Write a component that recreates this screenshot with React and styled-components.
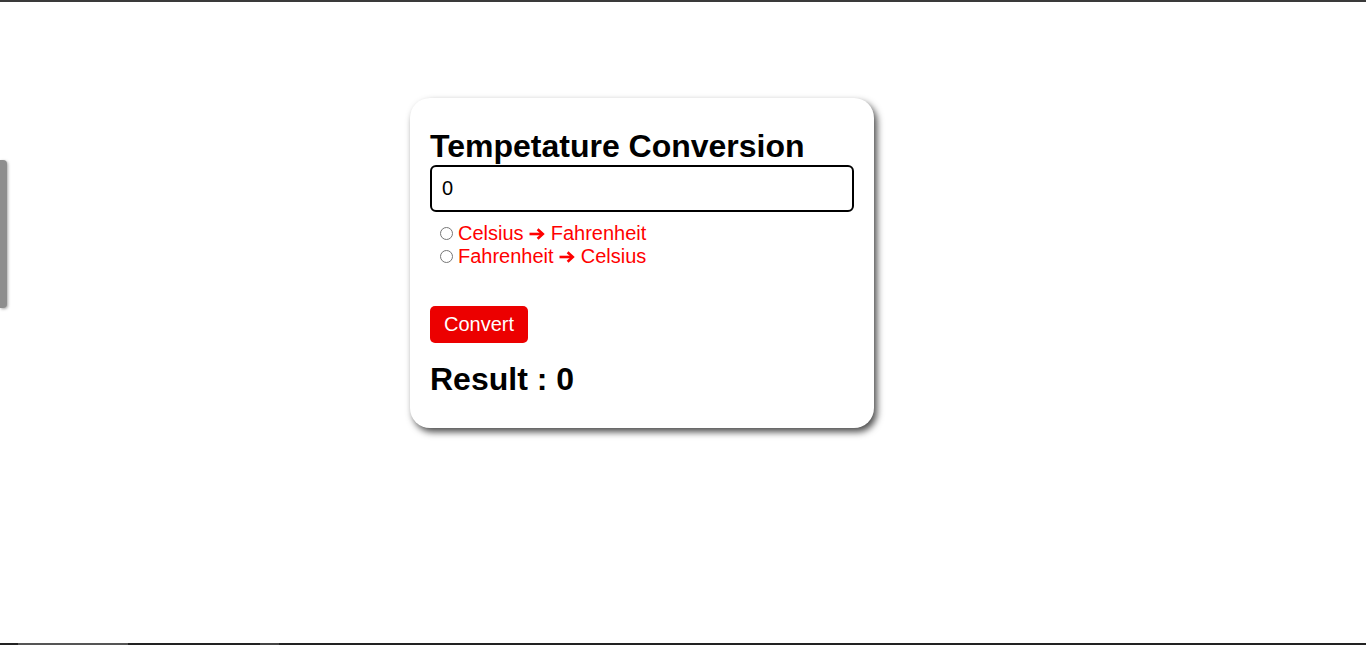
import styled, { createGlobalStyle } from 'styled-components';
import { useState } from 'react';

const GlobalStyle = createGlobalStyle`
  html, body {
    margin: 0;
    padding: 0;
    background: #ffffff;
    font-family: 'Liberation Sans', Arial, sans-serif;
  }
`;

function Arrow() {
  return (
    <ArrowIcon viewBox="0 0 16 12" aria-hidden="true">
      <path d="M0.5 6 H13.2" stroke="currentColor" strokeWidth="2.6" fill="none" />
      <path d="M8.6 1.2 L13.8 6 L8.6 10.8" stroke="currentColor" strokeWidth="2.6" fill="none" strokeLinejoin="miter" />
    </ArrowIcon>
  );
}

export default function App() {
  const [value, setValue] = useState('0');
  const [mode, setMode] = useState('');
  const [result, setResult] = useState(0);

  const convert = () => {
    const n = parseFloat(value) || 0;
    if (mode === 'cf') setResult(n * 9 / 5 + 32);
    else if (mode === 'fc') setResult((n - 32) * 5 / 9);
    else setResult(0);
  };

  return (
    <Page>
      <GlobalStyle />
      <SideTab />
      <Main>
        <Card>
          <Title>Tempetature Conversion</Title>
          <TempInput value={value} onChange={(e) => setValue(e.target.value)} />
          <Options>
            <Option>
              <input type="radio" name="mode" checked={mode === 'cf'} onChange={() => setMode('cf')} />
              Celsius <Arrow /> Fahrenheit
            </Option>
            <Option>
              <input type="radio" name="mode" checked={mode === 'fc'} onChange={() => setMode('fc')} />
              Fahrenheit <Arrow /> Celsius
            </Option>
          </Options>
          <ConvertButton onClick={convert}>Convert</ConvertButton>
          <Result>Result : {result}</Result>
        </Card>
      </Main>
      <BottomBar />
    </Page>
  );
}

const Page = styled.div`
  min-height: 100vh;
  box-sizing: border-box;
  border-top: 2px solid #3a3a3a;
  display: flex;
  flex-direction: column;
`;

const SideTab = styled.div`
  position: fixed;
  left: 0;
  top: 160px;
  width: 7px;
  height: 148px;
  background: #8e8e8e;
  border-radius: 0 4px 4px 0;
  box-shadow: 1px 1px 3px rgba(0, 0, 0, 0.35);
`;

const Main = styled.main`
  flex: 1;
  padding: 96px 0 0 410px;
`;

const Card = styled.div`
  width: 464px;
  box-sizing: border-box;
  padding: 30px 20px 30px;
  background: #fff;
  border-radius: 20px;
  box-shadow: 3px 4px 7px rgba(0, 0, 0, 0.7);
  display: flex;
  flex-direction: column;
  align-items: flex-start;
`;

const Title = styled.h1`
  margin: 0;
  font-size: 32px;
  font-weight: 700;
  color: #000;
`;

const TempInput = styled.input`
  width: 100%;
  height: 47px;
  box-sizing: border-box;
  padding: 0 10px;
  border: 2px solid #000;
  border-radius: 6px;
  font-family: 'Liberation Sans', Arial, sans-serif;
  font-size: 20px;
  color: #000;
  outline: none;
`;

const Options = styled.div`
  margin-top: 10px;
  padding-left: 5px;
  display: flex;
  flex-direction: column;
`;

const Option = styled.label`
  display: block;
  line-height: 23px;
  font-size: 20px;
  color: #ff0000;

  input {
    width: 13px;
    height: 13px;
    margin: 3px 5px 0 5px;
  }
`;

const ArrowIcon = styled.svg`
  width: 16px;
  height: 12px;
  vertical-align: 0px;
  color: #ff0000;
`;

const ConvertButton = styled.button`
  margin-top: 38px;
  height: 37px;
  padding: 0 14px;
  border: none;
  border-radius: 5px;
  background: #ec0000;
  color: #fff;
  font-family: 'Liberation Sans', Arial, sans-serif;
  font-size: 20px;
  cursor: pointer;
`;

const Result = styled.h2`
  margin: 18px 0 0;
  font-size: 32px;
  font-weight: 700;
  color: #000;
`;

const BottomBar = styled.div`
  height: 2px;
  background: linear-gradient(
    to right,
    #222 0,
    #222 18px,
    #555 18px,
    #555 128px,
    #222 128px,
    #222 260px,
    #444 260px,
    #444 279px,
    #222 279px
  );
`;
